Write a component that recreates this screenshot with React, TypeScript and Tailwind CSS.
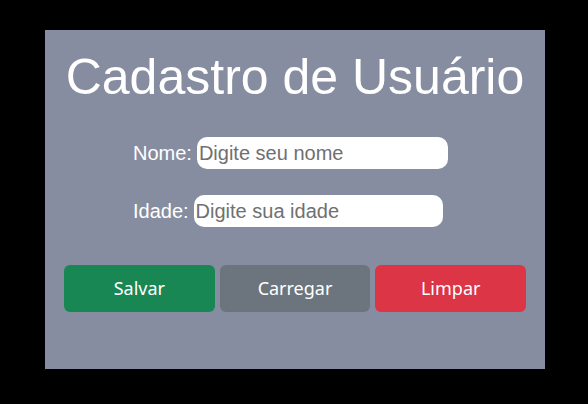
import React from 'react';

const App: React.FC = () => {
  return (
    <div className="w-[588px] h-[404px] bg-black pt-[30px] pl-[45px]">
      <div className="w-[500px] h-[339px] bg-[#878da0] px-[19px] pt-[18px] font-['Liberation_Sans',Arial,sans-serif]">
        <h1 className="text-center text-white text-[50px] leading-[58px] font-normal">Cadastro de Usuário</h1>

        <div className="ml-[69px] mt-[31px] flex flex-col gap-[26px]">
          <div className="flex items-center">
            <label className="text-white text-[20px]">Nome:</label>
            <input
              type="text"
              placeholder="Digite seu nome"
              className="ml-[5px] w-[251px] h-[32px] bg-white rounded-[10px] px-[2px] text-[20px] text-black placeholder:text-[#707070] outline-none"
            />
          </div>
          <div className="flex items-center">
            <label className="text-white text-[20px]">Idade:</label>
            <input
              type="text"
              placeholder="Digite sua idade"
              className="ml-[5px] w-[249px] h-[32px] bg-white rounded-[10px] px-[2px] text-[20px] text-black placeholder:text-[#707070] outline-none"
            />
          </div>
        </div>

        <div className="mt-[38px] flex gap-[5px] font-['Noto_Sans',sans-serif] text-[18px] text-white">
          <button className="flex-1 h-[47px] rounded-md bg-[#198754]">Salvar</button>
          <button className="flex-1 h-[47px] rounded-md bg-[#6c757d]">Carregar</button>
          <button className="flex-1 h-[47px] rounded-md bg-[#dc3545]">Limpar</button>
        </div>
      </div>
    </div>
  );
};

export default App;
